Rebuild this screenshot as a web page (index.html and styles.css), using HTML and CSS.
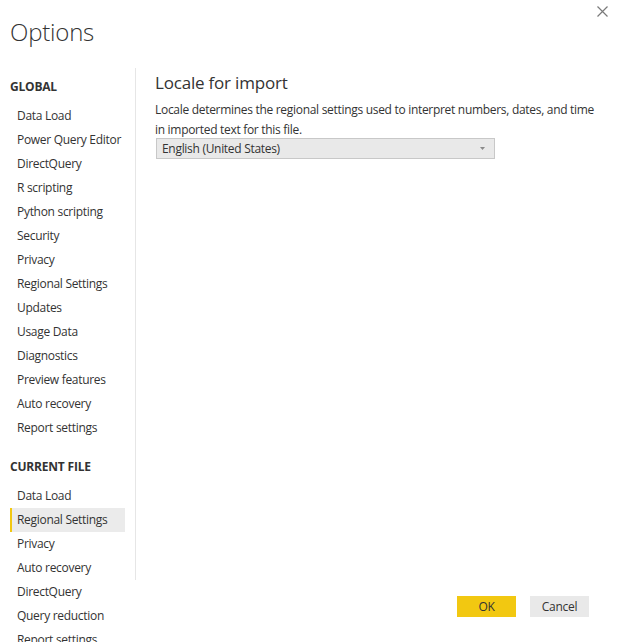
FILE: index.html
```html
<!DOCTYPE html>
<html>
<head>
<meta charset="utf-8">
<link rel="stylesheet" href="styles.css">
</head>
<body>
<div class="dialog">
  <header class="top">
    <h1 class="title">Options</h1>
    <button class="close" aria-label="Close">
      <svg width="11" height="11" viewBox="0 0 11 11"><path d="M0.5 0.5L10.5 10.5M10.5 0.5L0.5 10.5" stroke="#7a7a7a" stroke-width="1.2" fill="none"/></svg>
    </button>
  </header>
  <div class="body">
    <nav class="side">
      <div class="group">GLOBAL</div>
      <ul class="list">
        <li>Data Load</li>
        <li>Power Query Editor</li>
        <li>DirectQuery</li>
        <li>R scripting</li>
        <li>Python scripting</li>
        <li>Security</li>
        <li>Privacy</li>
        <li>Regional Settings</li>
        <li>Updates</li>
        <li>Usage Data</li>
        <li>Diagnostics</li>
        <li>Preview features</li>
        <li>Auto recovery</li>
        <li>Report settings</li>
      </ul>
      <div class="group group2">CURRENT FILE</div>
      <ul class="list">
        <li>Data Load</li>
        <li class="active">Regional Settings</li>
        <li>Privacy</li>
        <li>Auto recovery</li>
        <li>DirectQuery</li>
        <li>Query reduction</li>
        <li>Report settings</li>
      </ul>
    </nav>
    <main class="content">
      <h2 class="heading">Locale for import</h2>
      <p class="desc">Locale determines the regional settings used to interpret numbers, dates, and time in imported text for this file.</p>
      <div class="select">
        <span>English (United States)</span>
        <svg class="arrow" width="5" height="3" viewBox="0 0 5 3"><path d="M0 0H5L2.5 3Z" fill="#8a8a8a"/></svg>
      </div>
    </main>
  </div>
  <div class="actions">
    <button class="btn ok">OK</button>
    <button class="btn cancel">Cancel</button>
  </div>
</div>
</body>
</html>
```
FILE: styles.css
```css
html, body {
  margin: 0;
  padding: 0;
  background: #fff;
}
body {
  font-family: "Open Sans", "Noto Sans", sans-serif;
  color: #333;
  font-size: 12px;
  width: 617px;
  height: 642px;
  overflow: hidden;
}
.dialog {
  position: relative;
  width: 617px;
  height: 642px;
}
.top {
  display: flex;
  justify-content: space-between;
  align-items: flex-start;
  height: 62px;
}
.title {
  margin: 0;
  padding: 15px 0 0 10px;
  font-size: 24px;
  font-weight: 300;
  line-height: 34px;
  color: #333;
  letter-spacing: -0.2px;
}
.close {
  border: 0;
  background: none;
  padding: 0;
  margin: 6px 9px 0 0;
  width: 11px;
  height: 11px;
  display: flex;
}
.body {
  display: flex;
  align-items: flex-start;
}
.side {
  flex: 0 0 auto;
  width: 125px;
  padding-left: 10px;
  border-right: 1px solid #e6e6e6;
  margin-top: 6px;
  height: 512px;
}
.group {
  font-weight: 700;
  font-size: 12px;
  height: 24px;
  line-height: 24px;
  margin-top: 7px;
  margin-bottom: 5px;
  letter-spacing: -0.2px;
}
.group2 {
  margin-top: 15px;
}
.list {
  list-style: none;
  margin: 0;
  padding: 0;
  width: 115px;
}
.list li {
  height: 24px;
  line-height: 24px;
  padding-left: 7px;
  font-size: 12px;
  white-space: nowrap;
  letter-spacing: -0.3px;
  box-sizing: border-box;
}
.list li.active {
  background: #ebebeb;
  border-left: 2px solid #f2c811;
  padding-left: 5px;
}
.content {
  flex: 1 1 auto;
  min-width: 0;
  padding-left: 19px;
  padding-right: 20px;
}
.heading {
  margin: 8px 0 0 0;
  font-size: 17px;
  font-weight: 400;
  line-height: 26px;
  color: #333;
  letter-spacing: -0.2px;
}
.desc {
  margin: 4px 0 0 0;
  font-size: 12px;
  line-height: 20px;
  letter-spacing: -0.3px;
  max-width: 450px;
}
.select {
  margin-top: -2px;
  margin-left: 1px;
  width: 339px;
  height: 21px;
  box-sizing: border-box;
  background: #e9e9e9;
  border: 1px solid #c8c8c8;
  display: flex;
  align-items: center;
  justify-content: space-between;
  padding: 0 9px 0 5px;
  font-size: 12px;
  letter-spacing: -0.3px;
}
.actions {
  position: absolute;
  right: 28px;
  top: 596px;
  display: flex;
  gap: 14px;
}
.btn {
  width: 59px;
  height: 21px;
  border: 0;
  padding: 0;
  font-family: "Open Sans", "Noto Sans", sans-serif;
  font-size: 12px;
  color: #333;
  letter-spacing: -0.3px;
}
.ok {
  background: #f2c811;
}
.cancel {
  background: #e9e9e9;
}
```
